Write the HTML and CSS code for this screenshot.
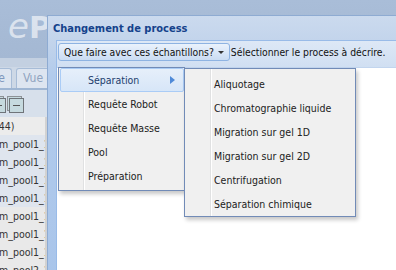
FILE: index.html
```html
<!DOCTYPE html>
<html lang="fr">
<head>
    <meta charset="UTF-8">
    <title>Changement de process</title>
    <link rel="stylesheet" href="styles.css">
</head>
<body>
    <div class="app">
        <div class="app-head"><span class="logo">e<span class="logo-rest">Pi</span></span></div>
        <div class="app-strip"></div>
        <div class="tabs">
            <div class="tab tab-first">e</div>
            <div class="tab">Vue é</div>
        </div>
        <div class="app-tools">
            <span class="tool-icon tool-cut"></span>
            <span class="tool-icon"></span>
        </div>
        <div class="grid">
            <div class="row row-group">(44)</div>
            <div class="row row-sel">m_pool1_1<span class="fade">3</span></div>
            <div class="row row-sel">m_pool1_1<span class="fade">3</span></div>
            <div class="row row-sel">m_pool1_1<span class="fade">3</span></div>
            <div class="row row-sel">m_pool1_1<span class="fade">7</span></div>
            <div class="row">m_pool1_1<span class="fade">8</span></div>
            <div class="row">m_pool1_1<span class="fade">k</span></div>
            <div class="row">m_pool1_1<span class="fade">c</span></div>
            <div class="row">m_pool2_1<span class="fade">3</span></div>
        </div>
    </div>

    <div class="win">
        <div class="win-head">Changement de process</div>
        <div class="win-body">
            <div class="tbar">
                <button class="split-btn">Que faire avec ces échantillons? <span class="caret"></span></button>
                <span class="hint">Sélectionner le process à décrire.</span>
            </div>
            <div class="win-content"></div>
        </div>
    </div>

    <div class="menu menu-main">
        <div class="menu-item active">Séparation <span class="arrow"></span></div>
        <div class="menu-item">Requête Robot</div>
        <div class="menu-item">Requête Masse</div>
        <div class="menu-item">Pool</div>
        <div class="menu-item">Préparation</div>
    </div>

    <div class="menu menu-sub">
        <div class="menu-item">Aliquotage</div>
        <div class="menu-item">Chromatographie liquide</div>
        <div class="menu-item">Migration sur gel 1D</div>
        <div class="menu-item">Migration sur gel 2D</div>
        <div class="menu-item">Centrifugation</div>
        <div class="menu-item">Séparation chimique</div>
    </div>
</body>
</html>
```

FILE: styles.css
```css
body {
    margin: 0;
    width: 396px;
    height: 270px;
    overflow: hidden;
    position: relative;
    background-color: #fff;
    font-family: "DejaVu Sans Condensed", "DejaVu Sans", sans-serif;
    font-size: 10.5px;
    color: #222;
}

/* application behind the window */
.app {
    width: 396px;
}

.app-head {
    height: 58px;
    background: linear-gradient(to bottom, #a9bdd8, #a4b8d3);
    overflow: hidden;
}

.logo {
    display: block;
    width: 39px;
    overflow: hidden;
    white-space: nowrap;
    padding: 9px 0 0 8px;
    font-family: "DejaVu Sans", sans-serif;
    font-style: italic;
    font-size: 34px;
    line-height: 34px;
    color: rgba(255, 255, 255, 0.6);
}

.logo-rest {
    font-style: normal;
    font-weight: bold;
    font-size: 30px;
}

.app-strip {
    height: 9px;
    background-color: #c3d0e1;
}

.tabs {
    display: flex;
    align-items: flex-end;
    height: 21px;
    background-color: #cdd8e6;
    border-bottom: 2px solid #9fb6d3;
}

.tab {
    height: 19px;
    line-height: 19px;
    padding: 0 6px;
    background-color: #dde5f0;
    border: 1px solid #a7bcd7;
    border-bottom: none;
    border-radius: 3px 3px 0 0;
    color: #90a3bf;
    font-size: 12px;
    margin-left: 4px;
    width: 60px;
    white-space: nowrap;
    overflow: hidden;
}

.tab-first {
    margin-left: -22px;
    width: 20px;
    text-align: right;
    color: #7f98bd;
}

.app-tools {
    display: flex;
    align-items: center;
    gap: 3px;
    height: 27px;
    background-color: #d7e0eb;
}

.tool-icon {
    position: relative;
    width: 13px;
    height: 13px;
    margin-top: 3px;
    border: 1px solid #6f7479;
    background-color: #c6dadf;
    box-shadow: -2px -2px 0 -1px #c6dadf, -2px -2px 0 0 #8d9296;
}

.tool-icon::after {
    content: "";
    position: absolute;
    left: 3px;
    top: 6px;
    width: 7px;
    height: 1px;
    background-color: #555;
}

.tool-cut {
    margin-left: -9px;
}

.grid {
    width: 45px;
    border-right: 2px solid #d2d2d2;
    overflow: hidden;
    font-size: 10.5px;
    color: #333;
}

.row {
    height: 18px;
    line-height: 19px;
    white-space: nowrap;
    margin-left: -1px;
    background-color: #e9e9e9;
}

.row-group {
    margin-left: -5px;
    background-color: #ececec;
}

.row-sel {
    background-color: #dfe5ee;
}

.fade {
    color: #c3cddb;
}

/* the dialog window */
.win {
    position: absolute;
    left: 47px;
    top: 15px;
    width: 370px;
    height: 270px;
    border: 1px solid #8eabd2;
    border-right: none;
    background: linear-gradient(to bottom, #cbdaee, #c1d3eb 30px, #b2cbec 60px, #a9c5ea);
}

.win-head {
    height: 24px;
    line-height: 25px;
    padding-left: 5px;
    font-weight: bold;
    font-size: 11px;
    color: #15428b;
}

.win-body {
    margin-left: 8px;
    height: 100%;
    border-top: 1px solid #99bbe8;
    border-left: 1px solid #99bbe8;
    background-color: #fff;
}

.tbar {
    display: flex;
    align-items: flex-start;
    height: 24px;
    padding: 2px 0 0 1px;
    background: linear-gradient(to bottom, #dde8f6, #d0dff2);
    border-bottom: 1px solid #c2d5ee;
    font-size: 10.3px;
}

.split-btn {
    display: flex;
    align-items: center;
    height: 18px;
    margin: 0;
    padding: 0 5px 0 5px;
    border: 1px solid #8eb3e2;
    border-radius: 3px;
    background: linear-gradient(to bottom, #eaf2fc, #cadcf3);
    font-family: inherit;
    font-size: inherit;
    color: #111;
}

.caret {
    margin-left: 4px;
    width: 0;
    height: 0;
    border-left: 3px solid transparent;
    border-right: 3px solid transparent;
    border-top: 3px solid #333;
}

.hint {
    margin-left: 1px;
    line-height: 18px;
    color: #111;
    white-space: nowrap;
}

/* menus */
.menu {
    position: absolute;
    box-sizing: border-box;
    border: 1px solid #718bb7;
    background: linear-gradient(to right, transparent 24px, #e0e1e2 24px, #e0e1e2 25px, #fff 25px, #fff 26px, transparent 26px) #f0f0f0;
    box-shadow: 2px 3px 4px rgba(0, 0, 0, 0.22);
}

.menu-main {
    left: 58px;
    top: 67px;
    width: 127px;
    padding: 0 0 2px;
}

.menu-sub {
    left: 184px;
    top: 68px;
    width: 172px;
    padding: 3px 0 0;
    background: linear-gradient(to right, transparent 25px, #e0e1e2 25px, #e0e1e2 26px, #fff 26px, #fff 27px, transparent 27px) #f0f0f0;
}

.menu-item {
    display: flex;
    align-items: center;
    justify-content: space-between;
    height: 22px;
    margin: 0 0 0 1px;
    padding: 0 8px 0 27px;
    border: 1px solid transparent;
    border-radius: 2px;
    white-space: nowrap;
}

.menu-item.active {
    background: linear-gradient(to bottom, #e6effa, #d7e6f8);
    border-color: #aaccf6;
    color: #233d6d;
}

.arrow {
    width: 0;
    height: 0;
    border-top: 4px solid transparent;
    border-bottom: 4px solid transparent;
    border-left: 5px solid #4f8ad8;
}
```
